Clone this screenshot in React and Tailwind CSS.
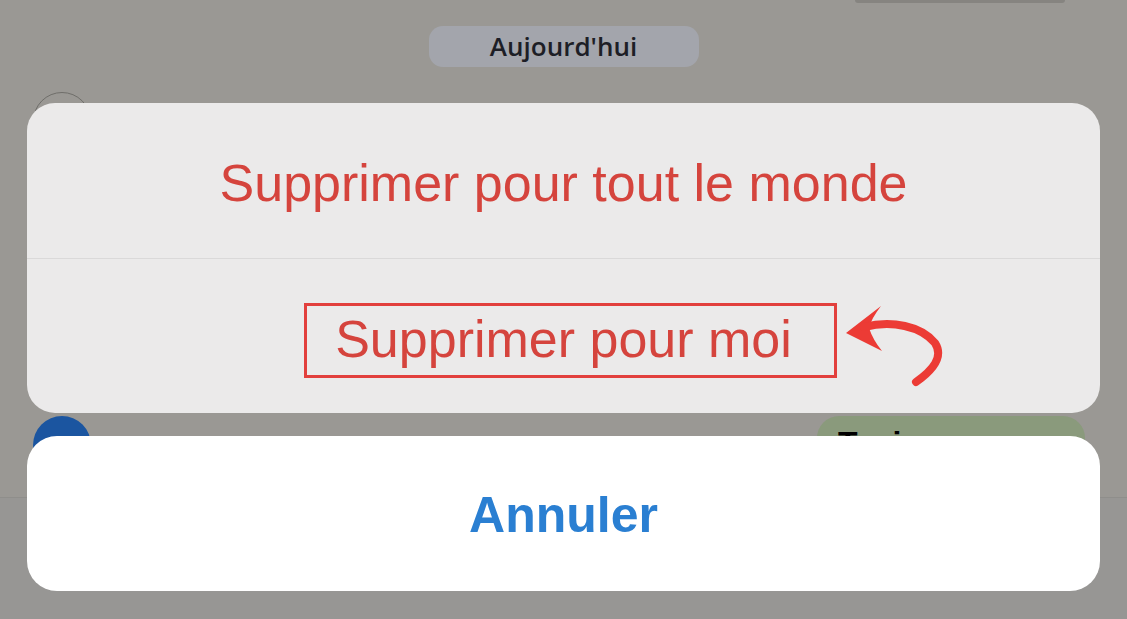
import React from "react";

function Arrow() {
  return (
    <svg
      className="absolute left-[840px] top-[300px]"
      width="110"
      height="90"
      viewBox="0 0 110 90"
    >
      <path d="M6 33 L41 6 Q31 19 29 28 Q33 40 42 51 Z" fill="#ec3b35" />
      <path
        d="M24 27 C52 20 81 26 95 43 C104 57 93 70 76 82"
        fill="none"
        stroke="#ec3b35"
        strokeWidth="8"
        strokeLinecap="round"
      />
    </svg>
  );
}

export default function App() {
  return (
    <div
      className="relative h-[619px] w-full overflow-hidden bg-[#9a9894]"
      style={{ fontFamily: '"Liberation Sans", Arial, sans-serif' }}
    >
      {/* chat background */}
      <div className="flex h-full flex-col">
        <div className="flex justify-end pr-[62px]">
          <div className="h-[3px] w-[210px] rounded-b bg-[#868480]" />
        </div>
        <div className="mt-[23px] flex justify-center">
          <div
            className="flex h-[41px] w-[270px] items-center justify-center rounded-[14px] bg-[#a3a5ac] text-[26px] font-semibold text-[#1d1e26]"
            style={{ fontFamily: '"Open Sans", sans-serif' }}
          >
            Aujourd'hui
          </div>
        </div>
        <div className="mt-[25px] pl-[33px]">
          <div className="h-[58px] w-[58px] rounded-full border-[1.5px] border-[#6f6e6a]" />
        </div>
        <div className="mt-[266px] flex items-start justify-between pl-[33px] pr-[42px]">
          <div className="h-[58px] w-[58px] rounded-full bg-[#1b55a0]" />
          <div className="h-[81px] w-[268px] rounded-tl-[22px] rounded-tr-[22px] bg-[#8a9a7c] pl-[21px] pt-[11px] text-[32px] font-semibold leading-none text-black">
            Tenir
          </div>
        </div>
        <div className="flex-1 border-t border-[#8f8e8b] bg-[#979694]" />
      </div>

      {/* action sheet */}
      <div className="absolute inset-0 flex flex-col gap-[23px] px-[27px] pt-[103px]">
        <div className="flex h-[310px] flex-col rounded-[28px] bg-[#ebeaea]">
          <div className="flex h-[155px] items-center justify-center pt-[4px] text-[52px] text-[#d5443d]">
            Supprimer pour tout le monde
          </div>
          <div className="h-px bg-[#dad9d9]" />
          <div className="flex flex-1 items-center justify-center pt-[6px] text-[52px] text-[#d5443d]">
            <span className="relative">
              Supprimer pour moi
              <span className="absolute -left-[31px] -right-[45px] bottom-0 top-[3px] border-[3px] border-[#e2403d]" />
            </span>
          </div>
        </div>
        <div className="flex h-[155px] items-center justify-center rounded-[30px] bg-white pt-[3px] text-[50px] font-bold text-[#2a7fd2]">
          Annuler
        </div>
      </div>

      <Arrow />
    </div>
  );
}
